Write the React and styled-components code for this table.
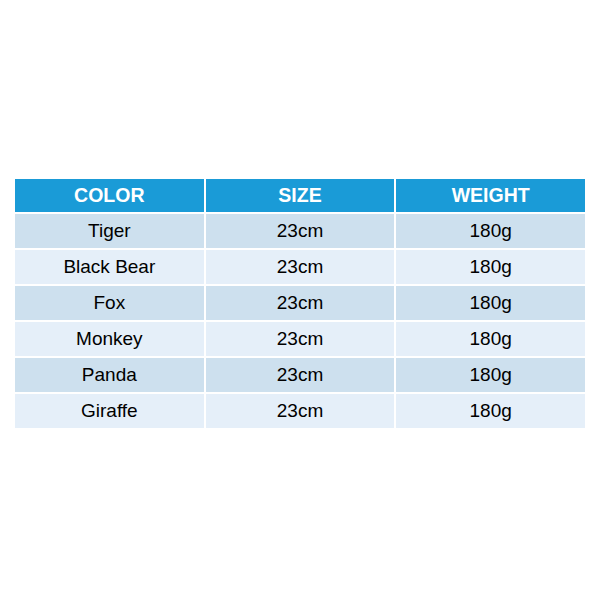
import React from 'react';
import styled, { createGlobalStyle } from 'styled-components';

const GlobalStyle = createGlobalStyle`
  html, body {
    margin: 0;
    padding: 0;
    background: #ffffff;
    font-family: "Liberation Sans", Arial, sans-serif;
  }
`;

const Page = styled.div`
  width: 600px;
  height: 600px;
  padding-top: 179px;
  box-sizing: border-box;
  display: flex;
  justify-content: center;
`;

const Table = styled.div`
  width: 570px;
  display: grid;
  grid-template-columns: repeat(3, 1fr);
  grid-auto-rows: 34px;
  grid-template-rows: 33px;
  gap: 2px;
  background: #ffffff;
  align-self: flex-start;
`;

const HeadCell = styled.div`
  background: #1a9bd7;
  color: #ffffff;
  font-weight: bold;
  font-size: 19.5px;
  display: flex;
  align-items: center;
  justify-content: center;
`;

const Cell = styled.div`
  background: ${(p) => (p.$odd ? '#cde0ee' : '#e5eff9')};
  color: #000000;
  font-size: 19px;
  display: flex;
  align-items: center;
  justify-content: center;
`;

const rows = ['Tiger', 'Black Bear', 'Fox', 'Monkey', 'Panda', 'Giraffe'];

export default function App() {
  return (
    <>
      <GlobalStyle />
      <Page>
        <Table>
          <HeadCell>COLOR</HeadCell>
          <HeadCell>SIZE</HeadCell>
          <HeadCell>WEIGHT</HeadCell>
          {rows.map((name, i) => (
            <React.Fragment key={name}>
              <Cell $odd={i % 2 === 0}>{name}</Cell>
              <Cell $odd={i % 2 === 0}>23cm</Cell>
              <Cell $odd={i % 2 === 0}>180g</Cell>
            </React.Fragment>
          ))}
        </Table>
      </Page>
    </>
  );
}
